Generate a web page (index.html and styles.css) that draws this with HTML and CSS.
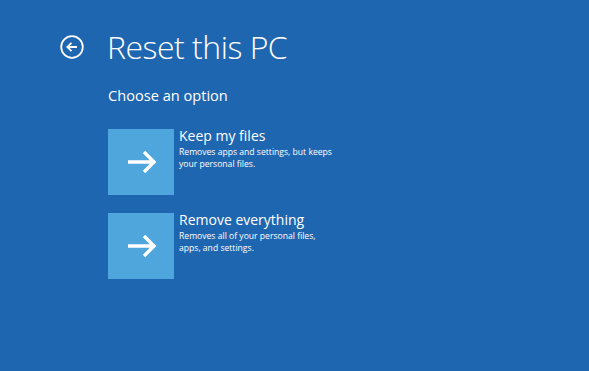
FILE: index.html
```html
<!DOCTYPE html>
<html lang="en">
<head>
    <meta charset="UTF-8">
    <title>Reset this PC</title>
    <link rel="stylesheet" href="styles.css">
</head>
<body>

    <!-- Header -->
    <div class="header">
        <svg class="back" width="24" height="24" viewBox="0 0 24 24">
            <circle cx="12" cy="12" r="10.8" fill="none" stroke="#fff" stroke-width="1.8"/>
            <path d="M17 12H7.5M11.5 7.8L7.3 12l4.2 4.2" fill="none" stroke="#fff" stroke-width="1.8"/>
        </svg>
        <h1>Reset this PC</h1>
    </div>

    <!-- Options -->
    <div class="content">
        <h2>Choose an option</h2>

        <div class="option">
            <div class="tile">
                <svg width="32" height="24" viewBox="0 0 32 24">
                    <path d="M2 12H28M18 2l10 10-10 10" fill="none" stroke="#fff" stroke-width="3.4"/>
                </svg>
            </div>
            <div class="text">
                <div class="name">Keep my files</div>
                <div class="desc">Removes apps and settings, but keeps<br>your personal files.</div>
            </div>
        </div>

        <div class="option">
            <div class="tile">
                <svg width="32" height="24" viewBox="0 0 32 24">
                    <path d="M2 12H28M18 2l10 10-10 10" fill="none" stroke="#fff" stroke-width="3.4"/>
                </svg>
            </div>
            <div class="text">
                <div class="name">Remove everything</div>
                <div class="desc">Removes all of your personal files,<br>apps, and settings.</div>
            </div>
        </div>
    </div>

</body>
</html>
```

FILE: styles.css
```css
/* General */
body {
    margin: 0;
    background: #1f66b1;
    color: #fff;
    font-family: "Open Sans", "Noto Sans", sans-serif;
    width: 589px;
    height: 371px;
    overflow: hidden;
}

/* Header */
.header {
    display: flex;
    align-items: center;
    padding: 27px 0 0 60px;
}

.back {
    margin-right: 23px;
}

.header h1 {
    margin: 0;
    font-size: 32px;
    font-weight: 300;
    line-height: 40px;
    letter-spacing: -0.5px;
}

/* Content */
.content {
    padding-left: 108px;
}

.content h2 {
    margin: 18px 0 24px;
    font-size: 14.6px;
    font-weight: 400;
    line-height: 20px;
}

.option {
    display: flex;
    margin-bottom: 18px;
}

.tile {
    width: 66px;
    height: 66px;
    background: #4ea6dc;
    display: flex;
    align-items: center;
    justify-content: center;
}

.tile svg {
    margin-left: 2px;
}

.text {
    padding-left: 5px;
}

.name {
    font-size: 14px;
    line-height: 14px;
    margin-top: 0;
}

.desc {
    font-size: 8.6px;
    line-height: 12px;
    margin-top: 3px;
}
```
